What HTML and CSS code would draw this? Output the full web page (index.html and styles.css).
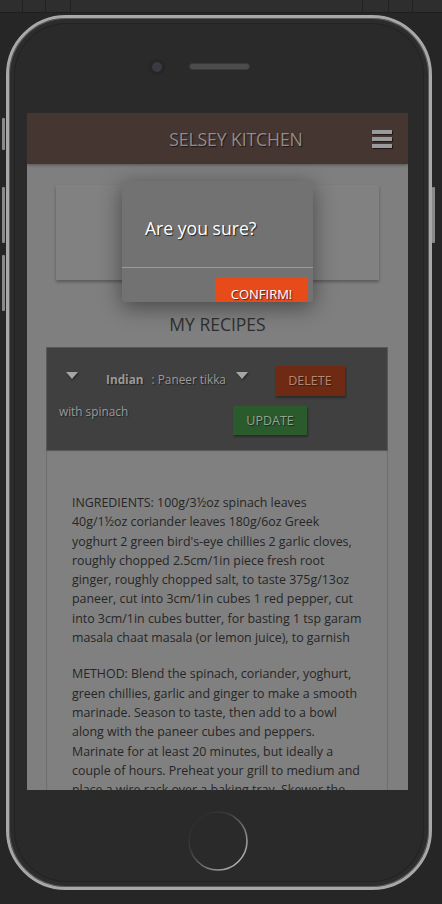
FILE: index.html
```html
<!DOCTYPE html>
<html lang="en">
<head>
<meta charset="utf-8">
<title>Selsey Kitchen</title>
<link rel="stylesheet" href="styles.css">
</head>
<body>
<div class="toolbar">
  <span class="tb-cell c1"></span>
  <span class="tb-cell c2"></span>
  <span class="tb-cell c3"></span>
  <span class="tb-cell grow"></span>
  <span class="tb-cell c5"></span>
  <span class="tb-cell c6"></span>
  <span class="tb-cell last"></span>
</div>

<div class="phone">
  <span class="side-btn l1"></span>
  <span class="side-btn l2"></span>
  <span class="side-btn l3"></span>
  <span class="side-btn r1"></span>

  <div class="top-area">
    <span class="camera"></span>
    <span class="speaker"></span>
  </div>

  <div class="screen">
    <header class="app-header">
      <h1 class="brand">SELSEY KITCHEN</h1>
      <button class="burger" aria-label="Menu">
        <span></span><span></span><span></span>
      </button>
    </header>

    <main class="content">
      <div class="banner-card"></div>

      <h2 class="section-title">MY RECIPES</h2>

      <article class="recipe">
        <div class="recipe-head">
          <div class="head-row first">
            <span class="caret"></span>
            <span class="cuisine">Indian</span>
            <span class="name">: Paneer tikka</span>
            <span class="caret second"></span>
            <button class="btn btn-delete">DELETE</button>
          </div>
          <div class="head-row">
            <span class="name rest">with spinach</span>
            <button class="btn btn-update">UPDATE</button>
          </div>
        </div>
        <div class="recipe-body">
          <p>INGREDIENTS: 100g/3½oz spinach leaves 40g/1½oz coriander leaves 180g/6oz Greek yoghurt 2 green bird's-eye chillies 2 garlic cloves, roughly chopped 2.5cm/1in piece fresh root ginger, roughly chopped salt, to taste 375g/13oz paneer, cut into 3cm/1in cubes 1 red pepper, cut into 3cm/1in cubes butter, for basting 1 tsp garam masala chaat masala (or lemon juice), to garnish</p>
          <p>METHOD: Blend the spinach, coriander, yoghurt, green chillies, garlic and ginger to make a smooth marinade. Season to taste, then add to a bowl along with the paneer cubes and peppers. Marinate for at least 20 minutes, but ideally a couple of hours. Preheat your grill to medium and place a wire rack over a baking tray. Skewer the paneer and peppers and grill until charred at the edges.</p>
        </div>
      </article>
    </main>

    <div class="modal" role="dialog">
      <div class="modal-body">Are you sure?</div>
      <div class="modal-foot">
        <button class="btn-confirm">CONFIRM!</button>
      </div>
    </div>
  </div>

  <div class="home-area">
    <svg class="home-btn" width="64" height="64" viewBox="0 0 64 64">
      <defs>
        <linearGradient id="ring" x1="0.1" y1="0.1" x2="0.9" y2="0.9">
          <stop offset="0" stop-color="#2a2a2a"/>
          <stop offset="0.3" stop-color="#3a3a3a"/>
          <stop offset="0.6" stop-color="#6a6a6a"/>
          <stop offset="1" stop-color="#b8b8b8"/>
        </linearGradient>
      </defs>
      <circle cx="32" cy="32" r="29" fill="none" stroke="url(#ring)" stroke-width="1.6"/>
    </svg>
  </div>
</div>
</body>
</html>
```

FILE: styles.css
```css
* { box-sizing: border-box; }

html, body {
  margin: 0;
  padding: 0;
  background: #262626;
  width: 442px;
  height: 904px;
  overflow: hidden;
  font-family: "Open Sans", "Noto Sans", sans-serif;
}

.toolbar {
  display: flex;
  height: 13px;
  background: #2e2e2e;
  border-bottom: 1px solid #1f1f1f;
}
.tb-cell { display: block; height: 12px; border-right: 1px solid #222; }
.c1 { width: 23px; }
.c2 { width: 23px; }
.c3 { width: 25px; }
.grow { flex: 1; }
.c5 { width: 26px; }
.c6 { width: 24px; }
.last { width: 29px; border-right: 0; }

.phone {
  position: relative;
  margin: 2px 0 0 6px;
  width: 426px;
  height: 875px;
  border: 3px solid #a8a8a8;
  border-radius: 60px;
  background: #2a2a2a;
  box-shadow: inset 0 0 0 1px #5a5a5a, inset 0 0 0 5px #2c2c2c, inset 0 0 0 6px #232323;
}

.side-btn {
  position: absolute;
  width: 3px;
  background: #8a8a8a;
  border-radius: 1px;
}
.l1 { left: -7px; top: 100px; height: 32px; }
.l2 { left: -7px; top: 169px; height: 56px; }
.l3 { left: -7px; top: 237px; height: 56px; }
.r1 { right: -6px; top: 169px; height: 56px; }

.top-area {
  height: 95px;
  display: flex;
  align-items: flex-start;
  justify-content: center;
  padding-top: 44px;
  gap: 27px;
  margin-right: 36px;
}
.camera {
  width: 10px;
  height: 10px;
  border-radius: 50%;
  background: #3a3a44;
  box-shadow: 0 0 0 3px #262628;
}
.speaker {
  width: 61px;
  height: 7px;
  border-radius: 4px;
  background: #4c4c4c;
  border: 1px solid #3a3a3a;
  margin-top: 1px;
}

.screen {
  position: relative;
  margin-left: 18px;
  width: 381px;
  height: 677px;
  overflow: hidden;
  background: #7f7f7f;
}

.app-header {
  height: 51px;
  background: #463632;
  display: flex;
  align-items: center;
  box-shadow: 0 1px 3px rgba(0,0,0,.35);
  position: relative;
}
.brand {
  flex: 1;
  margin: 0;
  padding-left: 73px;
  text-align: center;
  font-size: 17.6px;
  font-weight: 400;
  color: #8e8e8e;
  text-shadow: 1px 1px 1px #1e1514;
  letter-spacing: -0.1px;
}
.burger {
  width: 20px;
  margin-right: 16px;
  padding: 0;
  background: none;
  border: 0;
  display: flex;
  flex-direction: column;
  gap: 3px;
}
.burger span {
  display: block;
  height: 4px;
  background: #9a9a9a;
  box-shadow: 1px 1px 1px #1d1514;
}

.content { padding-top: 21px; }

.banner-card {
  margin: 0 29px;
  height: 95px;
  background: #818181;
  box-shadow: 0 2px 3px rgba(0,0,0,.3);
}

.section-title {
  margin: 30px 0 9px;
  text-align: center;
  font-size: 17.5px;
  font-weight: 400;
  color: #2f2f2f;
  line-height: 28px;
}

.recipe {
  margin: 0 20px 0 19px;
}
.recipe-head {
  height: 104px;
  background: #404040;
  border: 1px solid #585858;
  padding-top: 17px;
}
.head-row {
  display: flex;
  align-items: center;
}
.head-row.first { height: 31px; }
.caret {
  width: 0;
  height: 0;
  border-left: 6px solid transparent;
  border-right: 6px solid transparent;
  border-top: 7px solid #a5a5a5;
  margin-left: 19px;
  margin-top: -10px;
  filter: drop-shadow(1px 1px 1px #222);
}
.caret.second { margin-left: 10px; }
.cuisine {
  margin-left: 28px;
  margin-top: -3px;
  font-size: 11.8px;
  font-weight: 700;
  color: #9a9a9a;
  text-shadow: 1px 1px 1px #222;
}
.name {
  margin-left: 8px;
  margin-top: -3px;
  font-size: 11.8px;
  color: #9a9a9a;
  text-shadow: 1px 1px 1px #222;
}
.name.rest {
  margin-left: 12px;
  margin-top: -10px;
  flex: 0 0 174px;
}
.btn {
  border: 0;
  font-family: inherit;
  font-size: 12.5px;
  text-shadow: 1px 1px 1px #222;
  box-shadow: 1px 2px 2px rgba(0,0,0,.35);
  padding: 0;
}
.btn-delete {
  margin-left: 27px;
  width: 70px;
  height: 30px;
  background: #6e2a12;
  color: #b48676;
}
.btn-update {
  margin-top: 10px;
  width: 74px;
  height: 29px;
  background: #2b5a2d;
  color: #8fa78f;
}

.recipe-body {
  background: #808080;
  padding: 42px 26px 0;
  box-shadow: inset 1px 0 1px rgba(0,0,0,.15), inset -1px 0 1px rgba(0,0,0,.15);
  height: 400px;
}
.recipe-body p {
  margin: 0 0 17px;
  font-size: 12.4px;
  line-height: 19.3px;
  color: #262626;
}

.modal {
  position: absolute;
  top: 68px;
  left: 95px;
  width: 191px;
  height: 121px;
  background: #727272;
  border-radius: 3px;
  box-shadow: 0 5px 22px rgba(0,0,0,.45);
  overflow: hidden;
}
.modal-body {
  height: 87px;
  padding: 36px 0 0 23px;
  font-size: 17.6px;
  color: #fff;
  text-shadow: 1px 1px 1px #222;
  border-bottom: 1px solid #9a9a9a;
  line-height: 22px;
}
.modal-foot {
  display: flex;
  justify-content: flex-end;
  padding: 9px 5px 0 0;
}
.btn-confirm {
  width: 93px;
  height: 31px;
  border: 0;
  padding: 3px 0 0;
  background: #e84b1a;
  color: #fff;
  font-family: inherit;
  font-size: 13px;
  text-shadow: 1px 1px 1px #5a2010;
}

.home-area {
  display: flex;
  justify-content: center;
  padding-top: 19px;
  margin-right: 2px;
}
.home-btn { display: block; }
```
